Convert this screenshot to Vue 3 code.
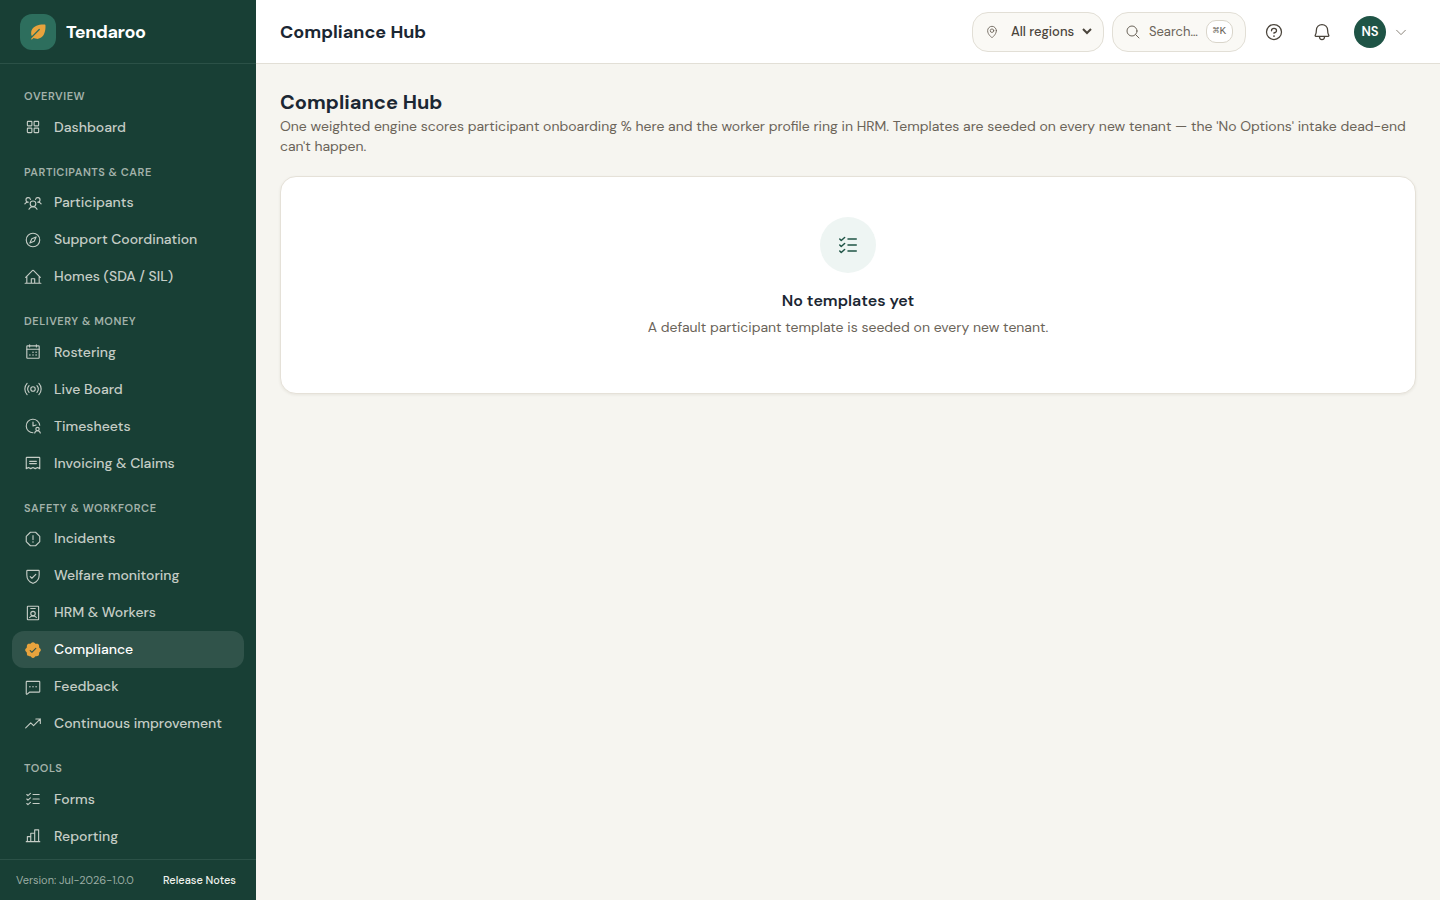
<template>
  <div class="app-shell">
    <aside class="sidebar">
      <a class="brand" href="#">
        <span class="brand-mark">
          <svg width="20" height="20" viewBox="0 0 256 256" fill="currentColor" v-html="icons.leaf" />
        </span>
        <span class="brand-name">Tendaroo</span>
      </a>

      <nav class="nav" aria-label="Main">
        <section v-for="group in groups" :key="group.label" class="nav-group">
          <h2 class="nav-label">{{ group.label }}</h2>
          <a
            v-for="item in group.items"
            :key="item.name"
            href="#"
            class="nav-item"
            :class="{ 'nav-item--active': item.name === current }"
          >
            <svg class="icon" width="18" height="18" viewBox="0 0 256 256" v-html="icons[item.icon]" />
            <span>{{ item.name }}</span>
          </a>
        </section>
      </nav>

      <footer class="sidebar-footer">
        <span>Version: Jul-2026-1.0.0</span>
        <a href="#">Release Notes</a>
      </footer>
    </aside>

    <div class="main">
      <header class="topbar">
        <div class="topbar-title">Compliance Hub</div>

        <div class="topbar-actions">
          <label class="pill region">
            <svg class="icon" width="14" height="14" viewBox="0 0 256 256" v-html="icons.pin" />
            <select v-model="region" aria-label="Region">
              <option>All regions</option>
            </select>
          </label>

          <button class="pill search" type="button">
            <svg class="icon" width="16" height="16" viewBox="0 0 256 256" v-html="icons.search" />
            <span>Search…</span>
            <kbd>⌘K</kbd>
          </button>

          <button class="icon-btn" type="button" aria-label="Help">
            <svg class="icon" width="20" height="20" viewBox="0 0 256 256" v-html="icons.question" />
          </button>
          <button class="icon-btn" type="button" aria-label="Notifications">
            <svg class="icon" width="20" height="20" viewBox="0 0 256 256" v-html="icons.bell" />
          </button>

          <button class="account" type="button" aria-label="Account">
            <span class="avatar">NS</span>
            <svg class="icon" width="14" height="14" viewBox="0 0 256 256" v-html="icons.caret" />
          </button>
        </div>
      </header>

      <main class="content">
        <h1>Compliance Hub</h1>
        <p class="intro">
          One weighted engine scores participant onboarding % here and the worker profile ring in HRM.
          Templates are seeded on every new tenant — the 'No Options' intake dead-end can't happen.
        </p>

        <section class="card">
          <div class="empty-icon">
            <svg class="icon" width="24" height="24" viewBox="0 0 256 256" v-html="icons.list" />
          </div>
          <h3>No templates yet</h3>
          <p>A default participant template is seeded on every new tenant.</p>
        </section>
      </main>
    </div>
  </div>
</template>

<script setup>
import { ref } from 'vue'

const current = ref('Compliance')
const region  = ref('All regions')

const groups = [
  {
    label: 'Overview',
    items: [{ name: 'Dashboard', icon: 'squares' }],
  },
  {
    label: 'Participants & Care',
    items: [
      { name: 'Participants',         icon: 'users' },
      { name: 'Support Coordination', icon: 'compass' },
      { name: 'Homes (SDA / SIL)',    icon: 'house' },
    ],
  },
  {
    label: 'Delivery & Money',
    items: [
      { name: 'Rostering',          icon: 'calendar' },
      { name: 'Live Board',         icon: 'broadcast' },
      { name: 'Timesheets',         icon: 'clock' },
      { name: 'Invoicing & Claims', icon: 'receipt' },
    ],
  },
  {
    label: 'Safety & Workforce',
    items: [
      { name: 'Incidents',              icon: 'octagon' },
      { name: 'Welfare monitoring',     icon: 'shield' },
      { name: 'HRM & Workers',          icon: 'badge' },
      { name: 'Compliance',             icon: 'seal' },
      { name: 'Feedback',               icon: 'chat' },
      { name: 'Continuous improvement', icon: 'trend' },
    ],
  },
  {
    label: 'Tools',
    items: [
      { name: 'Forms',     icon: 'list' },
      { name: 'Reporting', icon: 'chart' },
    ],
  },
]

const dot = (x, y, r = 11) => `<circle cx="${x}" cy="${y}" r="${r}" fill="currentColor" stroke="none"/>`

// Icon bodies on a 256 grid
const icons = {
  leaf: '<path d="M223.45,40.07a8,8,0,0,0-7.52-7.52C139.8,28.08,78.82,51,52.82,94a87.09,87.09,0,0,0-12.76,49A101.72,101.72,0,0,0,46.7,175.2a4,4,0,0,0,6.61,1.43l85-86.3a8,8,0,0,1,11.32,11.32L56.74,195.94,42.55,210.13a8.2,8.2,0,0,0-.6,11.1,8,8,0,0,0,11.71.43l16.79-16.79c14.14,6.84,28.41,10.57,42.56,11.07q1.67.06,3.33.06A86.93,86.93,0,0,0,162,203.18C205,177.18,227.93,116.21,223.45,40.07Z"/>',
  squares: '<rect x="48" y="48" width="64" height="64" rx="8"/><rect x="144" y="48" width="64" height="64" rx="8"/><rect x="48" y="144" width="64" height="64" rx="8"/><rect x="144" y="144" width="64" height="64" rx="8"/>',
  users: '<circle cx="128" cy="140" r="40"/><path d="M196,116a59.8,59.8,0,0,1,48,24M12,140a59.8,59.8,0,0,1,48-24M70.4,216a64.1,64.1,0,0,1,115.2,0M60,116A32,32,0,1,1,91.4,78M164.6,78A32,32,0,1,1,196,116"/>',
  compass: '<circle cx="128" cy="128" r="96"/><path d="M111,111,172,84,145,145,84,172Z"/>',
  house: '<path d="M16,216H240M152,216V152H104v64M40,116V216M216,216V116M24,132l98.34-98.34a8,8,0,0,1,11.32,0L232,132"/>',
  calendar: `<rect x="40" y="40" width="176" height="176" rx="8"/><path d="M176,24V56M80,24V56M40,88H216"/>${dot(128, 132)}${dot(172, 132)}${dot(84, 172)}${dot(128, 172)}${dot(172, 172)}`,
  broadcast: '<circle cx="128" cy="128" r="32"/><path d="M184,80a74,74,0,0,1,0,96M72,176a74,74,0,0,1,0-96M212,48a116,116,0,0,1,0,160M44,208a116,116,0,0,1,0-160"/>',
  clock: '<path d="M223.5,118A96,96,0,1,0,128,224M128,72v56l44-14M152,228a41,41,0,0,1,80,0"/><circle cx="192" cy="172" r="24"/>',
  receipt: '<path d="M32,208V56a8,8,0,0,1,8-8H216a8,8,0,0,1,8,8V208l-32-16-32,16-32-16L96,208,64,192ZM80,104h96M80,136h96"/>',
  octagon: `<path d="M91.3,32h73.4L224,91.3v73.4L164.7,224H91.3L32,164.7V91.3ZM128,80v56"/>${dot(128, 172)}`,
  shield: '<path d="M40,114.8V56a8,8,0,0,1,8-8H208a8,8,0,0,1,8,8v58.8c0,84.2-71.3,112-85.5,116.8a7.5,7.5,0,0,1-5,0C111.3,226.8,40,199,40,114.8ZM88,136l24,24,56-56"/>',
  badge: '<rect x="48" y="32" width="160" height="192" rx="8"/><circle cx="128" cy="136" r="32"/><path d="M80,192a60,60,0,0,1,96,0M96,64h64"/>',
  seal: '<path fill="currentColor" stroke="none" d="M225.86,102.82c-3.77-3.94-7.67-8-9.14-11.57-1.36-3.27-1.44-8.69-1.52-13.94-.15-9.76-.31-20.82-8-28.51s-18.75-7.85-28.51-8c-5.25-.08-10.67-.16-13.94-1.52-3.56-1.47-7.63-5.37-11.57-9.14C146.28,23.51,138.44,16,128,16s-18.27,7.51-25.18,14.14c-3.94,3.77-8,7.67-11.57,9.14C88,40.64,82.56,40.72,77.31,40.8c-9.76.15-20.82.31-28.51,8S41,67.55,40.8,77.31c-.08,5.25-.16,10.67-1.52,13.94-1.47,3.56-5.37,7.63-9.14,11.57C23.51,109.72,16,117.56,16,128s7.51,18.27,14.14,25.18c3.77,3.94,7.67,8,9.14,11.57,1.36,3.27,1.44,8.69,1.52,13.94.15,9.76.31,20.82,8,28.51s18.75,7.85,28.51,8c5.25.08,10.67.16,13.94,1.52,3.56,1.47,7.63,5.37,11.57,9.14C109.72,232.49,117.56,240,128,240s18.27-7.51,25.18-14.14c3.94-3.77,8-7.67,11.57-9.14,3.27-1.36,8.69-1.44,13.94-1.52,9.76-.15,20.82-.31,28.51-8s7.85-18.75,8-28.51c.08-5.25.16-10.67,1.52-13.94,1.47-3.56,5.37-7.63,9.14-11.57C232.49,146.28,240,138.44,240,128S232.49,109.73,225.86,102.82Zm-52.2,6.84-56,56a8,8,0,0,1-11.32,0l-24-24a8,8,0,0,1,11.32-11.32L112,148.69l50.34-50.35a8,8,0,0,1,11.32,11.32Z"/>',
  chat: `<path d="M32,224V56a8,8,0,0,1,8-8H216a8,8,0,0,1,8,8V192a8,8,0,0,1-8,8H82.5L45.15,230.1A8,8,0,0,1,32,224Z"/>${dot(84, 124)}${dot(128, 124)}${dot(172, 124)}`,
  trend: '<path d="M232,56,136,152,96,112,24,184M232,120V56H168"/>',
  list: '<path d="M128,128h88M128,64h88M128,192h88M92,48,56,80,40,64M92,112,56,144,40,128M92,176,56,208,40,192"/>',
  chart: '<path d="M48,208V136H96M224,208H32M96,208V88h56M152,208V40h56V208"/>',
  pin: '<circle cx="128" cy="104" r="32"/><path d="M208,104c0,72-80,128-80,128S48,176,48,104a80,80,0,0,1,160,0Z"/>',
  search: '<circle cx="112" cy="112" r="80"/><path d="M168.6,168.6,224,224"/>',
  question: `<circle cx="128" cy="128" r="96"/><path d="M128,144v-8c17.67,0,32-12.54,32-28s-14.33-28-32-28S96,92.54,96,108v4"/>${dot(128, 180)}`,
  bell: '<path d="M96,192a32,32,0,0,0,64,0M56,104a72,72,0,0,1,144,0c0,35.82,8.3,56.6,14.9,68A8,8,0,0,1,208,184H48a8,8,0,0,1-6.88-12C47.71,160.6,56,139.81,56,104Z"/>',
  caret: '<path d="M208,96,128,176,48,96"/>',
}
</script>

<style>
body {
  margin: 0;
  background: #f6f5f0;
}
</style>

<style scoped>
.app-shell {
  display: flex;
  height: 100vh;
  font-family: 'DM Sans', Inter, sans-serif;
  font-size: 14px;
  line-height: 20px;
  color: #1b2733;
  background: #f6f5f0;
  -webkit-font-smoothing: antialiased;
}

a {
  color: inherit;
  text-decoration: none;
}

h1, h2, h3, p {
  margin: 0;
}

button, select {
  font-family: inherit;
  color: inherit;
  cursor: pointer;
}

.icon {
  flex-shrink: 0;
  fill: none;
  stroke: currentColor;
  stroke-width: 16;
  stroke-linecap: round;
  stroke-linejoin: round;
}

.sidebar {
  display: flex;
  flex-direction: column;
  flex-shrink: 0;
  width: 256px;
  background: #183f35;
  color: #c5cdc6;
}

.brand {
  display: flex;
  align-items: center;
  gap: 10px;
  flex-shrink: 0;
  box-sizing: border-box;
  height: 64px;
  padding: 0 20px;
  border-bottom: 1px solid #2b5147;
}

.brand-mark {
  display: grid;
  place-items: center;
  width: 36px;
  height: 36px;
  border-radius: 12px;
  background: #2d6e5d;
  color: #e8a33d;
}

.brand-name {
  font-size: 18px;
  font-weight: 700;
  letter-spacing: -0.02em;
  color: #fff;
}

.nav {
  display: flex;
  flex-direction: column;
  flex: 1;
  gap: 18px;
  min-height: 0;
  padding: 24px 12px 0;
  overflow: hidden;
}

.nav-label {
  padding: 0 12px 4px;
  font-size: 11px;
  line-height: 1.5;
  font-weight: 600;
  letter-spacing: 0.05em;
  text-transform: uppercase;
  color: #a3b2aa;
}

.nav-item {
  display: flex;
  align-items: center;
  gap: 12px;
  padding: 8px 12px;
  border-radius: 12px;
  font-weight: 500;
  line-height: 21px;
}

.nav-item--active {
  background: #30534a;
  color: #fff;
}

.nav-item--active .icon {
  color: #e8a33d;
}

.sidebar-footer {
  display: flex;
  align-items: center;
  justify-content: space-between;
  flex-shrink: 0;
  box-sizing: border-box;
  height: 41px;
  padding: 0 20px 0 16px;
  border-top: 1px solid #2b5147;
  font-size: 11px;
  color: #9aaca3;
}

.sidebar-footer a {
  font-weight: 500;
  color: #eef1ec;
}

.main {
  flex: 1;
  min-width: 0;
}

.topbar {
  display: flex;
  align-items: center;
  justify-content: space-between;
  box-sizing: border-box;
  height: 64px;
  padding: 0 24px;
  background: #fff;
  border-bottom: 1px solid #e2dfd6;
}

.topbar-title {
  font-size: 18px;
  font-weight: 700;
}

.topbar-actions {
  display: flex;
  align-items: center;
  gap: 8px;
  color: #4a443b;
}

.pill {
  display: flex;
  align-items: center;
  gap: 8px;
  box-sizing: border-box;
  height: 40px;
  padding: 0 12px;
  border: 1px solid #e2dfd6;
  border-radius: 16px;
  background: #faf9f5;
  font-size: 13px;
  color: #6b6459;
}

.region {
  padding-right: 8px;
}

.region select {
  padding-right: 4px;
  border: none;
  outline: none;
  background: transparent;
  font-size: 13px;
  font-weight: 500;
  color: #4a443b;
}

.search kbd {
  padding: 0 6px;
  border: 1px solid #d9d5ca;
  border-radius: 10px;
  background: #fff;
  font-family: 'Liberation Mono', monospace;
  font-size: 11px;
  line-height: 21px;
}

.icon-btn {
  display: grid;
  place-items: center;
  width: 40px;
  height: 40px;
  padding: 0;
  border: none;
  background: none;
}

.account {
  display: flex;
  align-items: center;
  gap: 8px;
  padding: 4px 8px 4px 4px;
  border: none;
  background: none;
}

.account .icon {
  color: #7a7468;
}

.avatar {
  display: grid;
  place-items: center;
  width: 32px;
  height: 32px;
  border-radius: 50%;
  background: #1f5446;
  font-size: 13px;
  font-weight: 600;
  color: #fff;
}

.content {
  padding: 24px;
}

h1 {
  font-size: 20px;
  line-height: 28px;
  font-weight: 700;
}

.intro {
  color: #6b6459;
}

.card {
  display: flex;
  flex-direction: column;
  align-items: center;
  margin-top: 20px;
  padding: 40px 24px 56px;
  border: 1px solid #e5e1d8;
  border-radius: 16px;
  background: #fff;
  box-shadow: 0 1px 3px rgba(60, 50, 30, 0.08);
  text-align: center;
}

.empty-icon {
  display: grid;
  place-items: center;
  width: 56px;
  height: 56px;
  border-radius: 50%;
  background: #eef5f3;
  color: #1f5446;
}

.card h3 {
  margin-top: 16px;
  font-size: 16px;
  line-height: 24px;
  font-weight: 600;
}

.card p {
  margin-top: 4px;
  color: #6b6459;
}
</style>
